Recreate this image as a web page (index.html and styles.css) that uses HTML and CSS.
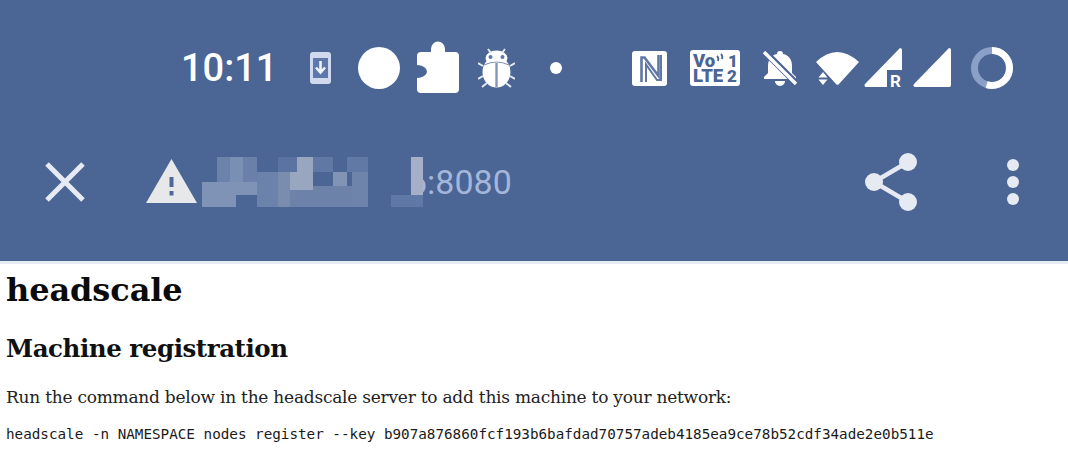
FILE: index.html
```html
<!DOCTYPE html>
<html lang="en">
<head>
    <meta charset="UTF-8">
    <meta name="viewport" content="width=device-width, initial-scale=1.0">
    <title>headscale - Machine registration</title>
    <link rel="stylesheet" href="styles.css">
</head>
<body>
<header class="topbar">
    <div class="status">
        <div class="status-left">
            <span class="time">10:11</span>
            <svg class="ic-download" width="21" height="32" viewBox="0 0 21 32">
                <rect width="21" height="32" rx="3" fill="#cfdaee"/>
                <rect x="3" y="6" width="15" height="20" fill="#5d78aa"/>
                <path d="M10.5 9v11M6 15.5l4.500 5 4.500-5" fill="none" stroke="#eef2f9" stroke-width="2.600"/>
            </svg>
            <svg class="ic-circle" width="42" height="42" viewBox="0 0 42 42"><circle cx="21" cy="21" r="21" fill="#fff"/></svg>
            <svg class="ic-puzzle" width="42" height="52" viewBox="0 0 42 52">
                <path d="M4 11H14V8A7 7.500 0 0 1 28 8V11H38A4 4 0 0 1 42 15V48A4 4 0 0 1 38 52H4A4 4 0 0 1 0 48V37A10 6.500 0 0 0 0 24V15A4 4 0 0 1 4 11Z" fill="#fff"/>
            </svg>
            <svg class="ic-bug" width="37" height="40" viewBox="0 0 37 40">
                <ellipse cx="18.500" cy="24" rx="14" ry="15.500" fill="#fff"/>
                <ellipse cx="18.500" cy="10" rx="11" ry="7.500" fill="#fff"/>
                <circle cx="12.500" cy="9" r="2" fill="#5d78aa"/>
                <circle cx="24.500" cy="9" r="2" fill="#5d78aa"/>
                <path d="M10 1l3 4M27 1l-3 4M0 15l5 3M37 15l-5 3M0 31l5-3M37 31l-5-3M4 39l5-4M33 39l-5-4" stroke="#e4e9f3" stroke-width="2" fill="none"/>
                <path d="M18.500 15V39" stroke="#8397bb" stroke-width="2.400" fill="none"/>
                <path d="M6 17Q18.500 11 31 17" stroke="#8397bb" stroke-width="1.200" fill="none"/>
            </svg>
            <svg class="ic-dot" width="12" height="12" viewBox="0 0 12 12"><circle cx="6" cy="6" r="6" fill="#fff"/></svg>
        </div>
        <div class="status-right">
            <svg width="35" height="35" viewBox="0 0 35 35">
                <rect width="35" height="35" rx="3" fill="#fff"/>
                <path d="M9.500 31V6.500H12.500L26.500 25V4" fill="none" stroke="#5f78a6" stroke-width="2.600"/>
                <path d="M14 31V13.500L25 29H29V4" fill="none" stroke="#5f78a6" stroke-width="2"/>
            </svg>
            <svg class="ic-volte" width="50" height="36" viewBox="0 0 50 36">
                <rect width="50" height="36" rx="3" fill="#fff"/>
                <text class="volte-text" x="3" y="17" font-size="18.500">Vo</text>
                <text class="volte-text" x="3" y="32" font-size="18.500">LTE</text>
                <text class="volte-text" x="38" y="17" font-size="17">1</text>
                <text class="volte-text" x="37" y="32" font-size="17">2</text>
                <path d="M27 6q2 2 1 5M31 4q2 2 1 5" fill="none" stroke="#4b6595" stroke-width="1.800"/>
            </svg>
            <svg class="ic-bell" width="34" height="35" viewBox="0 0 34 35">
                <path d="M17 0a3 3 0 0 1 3 3c6 1 9 6 9 12v7l4 4v2H1v-2l4-4V15c0-6 3-11 9-12a3 3 0 0 1 3-3ZM12 30h10a5 5 0 0 1-10 0Z" fill="#fff"/>
                <path d="M1 0l32 32" stroke="#4b6595" stroke-width="6.500"/>
                <path d="M1 1l32 32" stroke="#fff" stroke-width="3.400"/>
            </svg>
            <svg class="ic-wifi" width="43" height="36" viewBox="0 0 43 36">
                <path d="M0 12Q21 -8 43 12L23 34a2 2 0 0 1-3 0Z" fill="#fff"/>
                <path d="M7 22l4.500 5.500H2.500ZM2.500 29.500h9L7 35Z" fill="#fff"/>
            </svg>
            <svg class="ic-signal-r" width="38" height="43" viewBox="0 0 38 43">
                <path d="M36 0a2 2 0 0 1 2 2V22H23V39H2a2 2 0 0 1-1-3Z" fill="#fff"/>
                <text class="r-text" x="26" y="38.500" font-size="17">R</text>
            </svg>
            <svg class="ic-signal" width="38" height="39" viewBox="0 0 38 39">
                <path d="M36 0a2 2 0 0 1 2 2V37a2 2 0 0 1-2 2H2a2 2 0 0 1-1-3Z" fill="#fff"/>
            </svg>
            <svg class="ic-ring" width="42" height="42" viewBox="0 0 42 42">
                <circle cx="21" cy="21" r="17.500" fill="none" stroke="#8ba0c6" stroke-width="7"/>
                <circle class="ring-on" cx="21" cy="21" r="17.500" fill="none" stroke="#fff" stroke-width="7" pathLength="100" stroke-dasharray="55 45"/>
            </svg>
        </div>
    </div>
    <div class="toolbar">
        <svg class="ic-close" width="40" height="40" viewBox="0 0 40 40">
            <path d="M2 2L38 38M38 2L2 38" stroke="#e6eaf3" stroke-width="5" fill="none"/>
        </svg>
        <svg class="ic-warn" width="51" height="44" viewBox="0 0 51 44">
            <path d="M25.500 0L51 44H0Z" fill="#e7e8ea"/>
            <path d="M23.500 18h4v10h-4ZM23.500 32h4v4.500h-4Z" fill="#4f6896"/>
        </svg>
        <div class="url">
            <span class="url-text">6:8080</span>
            <svg class="redact" width="223" height="50" viewBox="0 0 223 50">
                <rect x="195" y="0" width="14" height="38" fill="#4b6595"/>
                <rect x="15" y="0" width="13" height="25" fill="#6b82ab"/>
                <rect x="28" y="0" width="13" height="25" fill="#7a8fb4"/>
                <rect x="41" y="0" width="14" height="25" fill="#6a80aa"/>
                <rect x="0" y="25" width="34" height="25" fill="#7f93b7"/>
                <rect x="34" y="25" width="21" height="13" fill="#7f93b7"/>
                <rect x="55" y="15" width="21" height="35" fill="#6b82ab"/>
                <rect x="76" y="0" width="19" height="15" fill="#5a73a0"/>
                <rect x="76" y="15" width="12" height="35" fill="#7a8dae"/>
                <rect x="95" y="0" width="16" height="15" fill="#98a6c0"/>
                <rect x="88" y="15" width="23" height="18" fill="#98a6c0"/>
                <rect x="88" y="33" width="62" height="17" fill="#6d82a8"/>
                <rect x="111" y="0" width="20" height="15" fill="#6078a4"/>
                <rect x="111" y="29" width="39" height="4" fill="#6d82a8"/>
                <rect x="131" y="15" width="14" height="14" fill="#8294b5"/>
                <rect x="145" y="0" width="21" height="15" fill="#607aa5"/>
                <rect x="150" y="15" width="16" height="35" fill="#6f84ab"/>
                <rect x="189" y="38" width="32" height="12" fill="#5f78a5"/>
                <rect x="209" y="0" width="12" height="38" fill="#a5b0c8"/>
            </svg>
        </div>
        <svg class="ic-share" width="52" height="58" viewBox="0 0 52 58">
            <path d="M43 9L9 29L43 49" fill="none" stroke="#e6eaf3" stroke-width="4.500"/>
            <circle cx="43" cy="9" r="9" fill="#e6eaf3"/>
            <circle cx="9" cy="29" r="9" fill="#e6eaf3"/>
            <circle cx="43" cy="49" r="9" fill="#e6eaf3"/>
        </svg>
        <div class="menu-dots"><span></span><span></span><span></span></div>
    </div>
</header>
<main class="content">
    <h1>headscale</h1>
    <h2>Machine registration</h2>
    <p>Run the command below in the headscale server to add this machine to your network:</p>
    <code>headscale -n NAMESPACE nodes register --key b907a876860fcf193b6bafdad70757adeb4185ea9ce78b52cdf34ade2e0b511e</code>
</main>
</body>
</html>
```

FILE: styles.css
```css
:root {
    --bar: #4b6595;
    --serif: "DejaVu Serif", "Liberation Serif", serif;
}
html, body {
    margin: 0;
    height: 457px;
    overflow: hidden;
    background: #fff;
}
svg {
    display: block;
    flex: none;
}
.topbar {
    height: 261px;
    background: var(--bar);
    border-bottom: 3px solid #e6ebf4;
}
.status {
    height: 136px;
    padding: 0 55px 0 181px;
    display: flex;
    justify-content: space-between;
    align-items: center;
}
.status-left, .status-right {
    display: flex;
    align-items: center;
}
.time {
    color: #fff;
    font-family: Roboto, sans-serif;
    font-weight: 500;
    font-size: 38px;
    line-height: 1;
    width: 94px;
}
.ic-download { margin-left: 35px; }
.ic-circle { margin-left: 27px; }
.ic-puzzle { margin-left: 17px; margin-top: -2px; }
.ic-bug { margin-left: 19px; }
.ic-dot { margin-left: 35px; }
.ic-volte { margin-left: 23px; }
.ic-bell { margin-left: 23px; }
.ic-wifi { margin-left: 19px; }
.ic-signal-r { margin-left: 5px; margin-top: 3px; }
.ic-signal { margin-left: 11px; margin-top: -2px; }
.ic-ring { margin-left: 20px; }
.ring-on {
    transform: rotate(-90deg);
    transform-origin: center;
}
.volte-text, .r-text {
    font-family: Roboto, sans-serif;
    font-weight: 900;
    fill: var(--bar);
}
.r-text { fill: #fff; font-weight: 700; }
.toolbar {
    height: 92px;
    padding-left: 45px;
    padding-right: 49px;
    display: flex;
    align-items: center;
}
.ic-warn { margin-left: 61px; margin-top: -2px; }
.url {
    position: relative;
    margin-left: 5px;
    padding-left: 206px;
    flex: 1;
}
.url-text {
    color: #a3b6dc;
    font-family: Roboto, sans-serif;
    font-size: 34px;
    line-height: 50px;
    display: block;
}
.redact {
    position: absolute;
    left: 0;
    top: 0;
}
.menu-dots {
    margin-left: 90px;
    display: flex;
    flex-direction: column;
    gap: 5px;
}
.menu-dots span {
    width: 12px;
    height: 12px;
    border-radius: 50%;
    background: #e6eaf3;
}
.content {
    padding: 0 6px;
}
h1 {
    margin: 0;
    padding-top: 4px;
    font-family: var(--serif);
    font-size: 32px;
    letter-spacing: -0.1px;
    line-height: 44px;
    color: #0b0b0b;
}
h2 {
    margin: 0;
    padding-top: 19px;
    font-family: var(--serif);
    font-size: 24.500px;
    letter-spacing: -0.45px;
    line-height: 36px;
    color: #111;
}
p {
    margin: 0;
    padding-top: 18px;
    font-family: var(--serif);
    font-size: 17px;
    letter-spacing: -0.24px;
    line-height: 24px;
    color: #222;
}
code {
    display: block;
    padding-top: 16px;
    font-family: "DejaVu Sans Mono", monospace;
    font-size: 14.270px;
    line-height: 18px;
    color: #1a1a1a;
    white-space: nowrap;
}
```
